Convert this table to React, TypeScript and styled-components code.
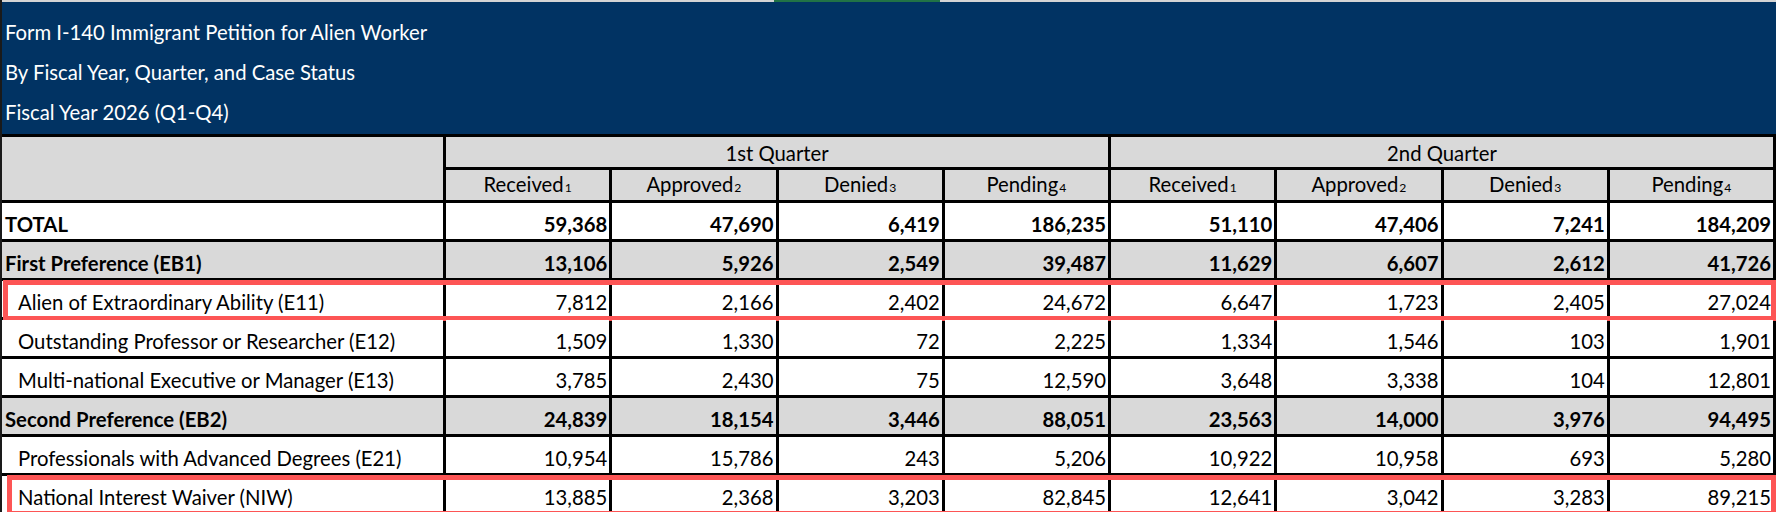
import React from "react";
import styled, { createGlobalStyle } from "styled-components";

type RowKind = "total" | "group" | "item";

interface SheetRow {
  label: string;
  kind: RowKind;
  values: string[];
  mark?: number; // left offset of the red annotation box
}

const statuses = [
  ["Received", "1"],
  ["Approved", "2"],
  ["Denied", "3"],
  ["Pending", "4"],
];

const rows: SheetRow[] = [
  { label: "TOTAL", kind: "total", values: ["59,368", "47,690", "6,419", "186,235", "51,110", "47,406", "7,241", "184,209"] },
  { label: "First Preference (EB1)", kind: "group", values: ["13,106", "5,926", "2,549", "39,487", "11,629", "6,607", "2,612", "41,726"] },
  { label: "Alien of Extraordinary Ability (E11)", kind: "item", mark: 1, values: ["7,812", "2,166", "2,402", "24,672", "6,647", "1,723", "2,405", "27,024"] },
  { label: "Outstanding Professor or Researcher (E12)", kind: "item", values: ["1,509", "1,330", "72", "2,225", "1,334", "1,546", "103", "1,901"] },
  { label: "Multi-national Executive or Manager (E13)", kind: "item", values: ["3,785", "2,430", "75", "12,590", "3,648", "3,338", "104", "12,801"] },
  { label: "Second Preference (EB2)", kind: "group", values: ["24,839", "18,154", "3,446", "88,051", "23,563", "14,000", "3,976", "94,495"] },
  { label: "Professionals with Advanced Degrees (E21)", kind: "item", values: ["10,954", "15,786", "243", "5,206", "10,922", "10,958", "693", "5,280"] },
  { label: "National Interest Waiver (NIW)", kind: "item", mark: 5, values: ["13,885", "2,368", "3,203", "82,845", "12,641", "3,042", "3,283", "89,215"] },
];

const App = () => {
  return (
    <>
      <GlobalStyle />
      <Page>
        <TopStrip>
          <GreenTab />
        </TopStrip>
        <TitleBlock>
          <TitleLine>Form I-140 Immigrant Petition for Alien Worker</TitleLine>
          <TitleLine>By Fiscal Year, Quarter, and Case Status</TitleLine>
          <TitleLine>Fiscal Year 2026 (Q1-Q4)</TitleLine>
        </TitleBlock>
        <Sheet>
          <HeaderGrid>
            <Corner />
            <QuarterCell>1st Quarter</QuarterCell>
            <QuarterCell>2nd Quarter</QuarterCell>
            {[0, 1].flatMap((q) =>
              statuses.map(([name, note]) => (
                <StatusCell key={`${q}-${name}`}>
                  {name}
                  <Note>{note}</Note>
                </StatusCell>
              ))
            )}
          </HeaderGrid>
          {rows.map((row) => (
            <Row key={row.label} $mark={row.mark}>
              <LabelCell $kind={row.kind}>{row.label}</LabelCell>
              {row.values.map((v, i) => (
                <NumCell key={i} $kind={row.kind}>
                  {v}
                </NumCell>
              ))}
            </Row>
          ))}
        </Sheet>
      </Page>
    </>
  );
};

export default App;

const GlobalStyle = createGlobalStyle`
  html, body {
    margin: 0;
    padding: 0;
    background: #ffffff;
    overflow: hidden;
  }
  body {
    font-family: Lato, "Liberation Sans", sans-serif;
    font-size: 20.3px;
    color: #000;
  }
`;

const Page = styled.div`
  width: 1776px;
  box-sizing: border-box;
  border-left: 2px solid #1a1a1a;
`;

const TopStrip = styled.div`
  display: flex;
  height: 2px;
  background: #d4d4d4;
`;

const GreenTab = styled.div`
  margin-left: 772px;
  width: 166px;
  background: #217346;
`;

const TitleBlock = styled.div`
  background: #013363;
  color: #ffffff;
  height: 132px;
  box-sizing: border-box;
  padding: 10px 0 0 3px;
`;

const TitleLine = styled.div`
  line-height: 40px;
  white-space: nowrap;
`;

const Sheet = styled.div`
  display: flex;
  flex-direction: column;
  gap: 3px;
  background: #000;
  padding: 3px 3px 0 0;
`;

const columns = `441px repeat(8, 1fr)`;

const HeaderGrid = styled.div`
  display: grid;
  grid-template-columns: ${columns};
  grid-template-rows: 30px 30px;
  gap: 3px;
`;

const HeadCell = styled.div`
  background: #d9d9d9;
  display: flex;
  align-items: flex-end;
  justify-content: center;
  line-height: 1.2;
  padding-bottom: 2px;
  box-sizing: border-box;
`;

const Corner = styled(HeadCell)`
  grid-row: span 2;
`;

const QuarterCell = styled(HeadCell)`
  grid-column: span 4;
`;

const StatusCell = styled(HeadCell)`
  align-items: baseline;
  padding-top: 2px;
`;

const Note = styled.span`
  font-size: 0.6em;
  margin-left: 1px;
`;

const Row = styled.div<{ $mark?: number }>`
  display: grid;
  grid-template-columns: ${columns};
  column-gap: 3px;
  height: 36px;
  position: relative;

  ${({ $mark }) =>
    $mark !== undefined &&
    `
    &::after {
      content: "";
      position: absolute;
      left: ${$mark}px;
      right: -3px;
      top: -1px;
      bottom: -4px;
      border: 5px solid #fd5555;
      pointer-events: none;
    }
  `}
`;

const Cell = styled.div<{ $kind: RowKind }>`
  display: flex;
  align-items: flex-end;
  line-height: 1.2;
  padding-bottom: 3px;
  box-sizing: border-box;
  white-space: nowrap;
  overflow: hidden;
  background: ${({ $kind }) => ($kind === "group" ? "#d9d9d9" : "#ffffff")};
  font-weight: ${({ $kind }) => ($kind === "item" ? 400 : 700)};
`;

const LabelCell = styled(Cell)`
  padding-left: ${({ $kind }) => ($kind === "item" ? "16px" : "3px")};
`;

const NumCell = styled(Cell)`
  justify-content: flex-end;
  padding-right: 2px;
`;
